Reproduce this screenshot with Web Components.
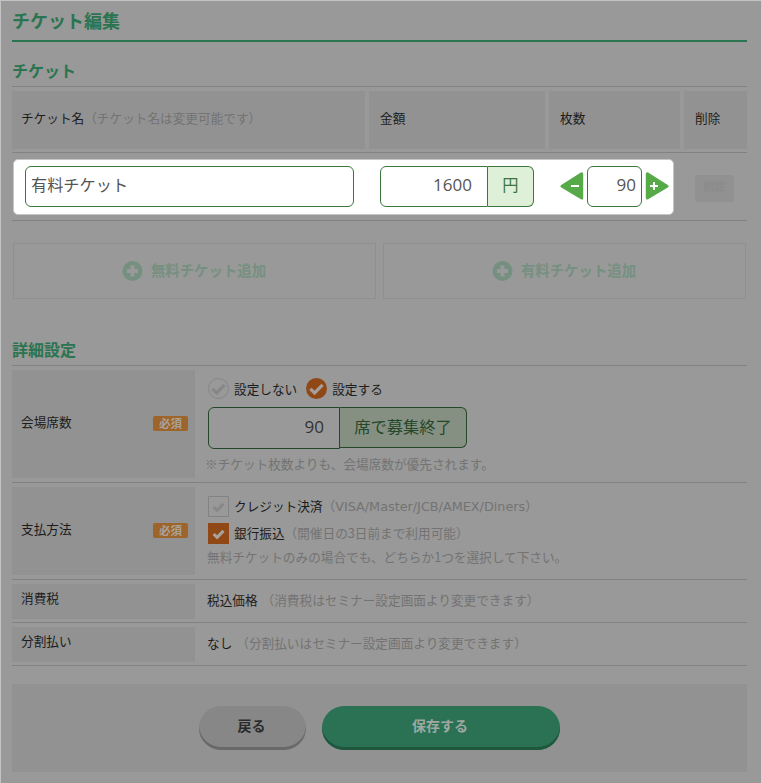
<!DOCTYPE html>
<html lang="ja">
<head>
<meta charset="utf-8">
<title>チケット編集</title>
<style>
html,body{margin:0;height:100%;background:#999}
body{overflow:hidden;font-family:"Noto Sans CJK JP",sans-serif;font-size:12.65px;color:#1c1c1c;line-height:18px}
</style>
</head>
<body>
<ticket-page></ticket-page>
<script>
const define = (name, html) => {
  const t = document.createElement('template');
  t.innerHTML = html;
  customElements.define(name, class extends HTMLElement {
    constructor() {
      super();
      this.attachShadow({ mode: 'open' }).appendChild(t.content.cloneNode(true));
    }
  });
};

define('section-title', `<style>
:host{display:flex;align-items:center;box-sizing:border-box;color:#2b7450;font-weight:700;font-size:16px;height:27px;border-bottom:1px solid #828282;padding-bottom:7px}
:host([main]){font-size:18px;height:41px;border-bottom:2px solid #2b7450;padding-bottom:2px}
</style><slot></slot>`);

define('head-cell', `<style>
:host{display:flex;align-items:center;background:#929292;padding:0 0 4px var(--pad,11px);box-sizing:border-box;height:58px;white-space:nowrap}
</style><slot></slot>`);

define('hint-text', `<style>:host{color:#737373;white-space:nowrap}</style><slot></slot>`);

define('text-field', `<style>
:host{display:flex;align-items:center;box-sizing:border-box;height:41px;border:1px solid #3c763d;border-radius:6px;font:16.2px/24px "Open Sans","Noto Sans CJK JP",sans-serif;color:#555;padding:0 5px 3px;white-space:nowrap}
:host([num]){justify-content:flex-end;font-size:17px}
:host([joined]){border-radius:6px 0 0 6px;padding-right:15px}
:host([dim]){border-color:#24472a;color:#333;height:42px;padding-bottom:2px}
</style><slot></slot>`);

define('field-addon', `<style>
:host{display:flex;align-items:center;justify-content:center;box-sizing:border-box;height:41px;border:1px solid #3c763d;border-left:0;border-radius:0 6px 6px 0;background:#dff0d8;color:#3c763d;font-size:16.3px;padding-bottom:4px;white-space:nowrap}
:host([dim]){border-color:#24472a;background:#869082;color:#24472a}
</style><slot></slot>`);

define('step-minus', `<style>:host{display:block;width:24px;height:28px}svg{display:block}</style>
<svg width="24" height="28"><path d="M21.7 1.8V26L2 14.2z" fill="#56aa47" stroke="#56aa47" stroke-width="3" stroke-linejoin="round"/><path d="M11 14h8" stroke="#fff" stroke-width="2"/></svg>`);

define('step-plus', `<style>:host{display:block;width:24px;height:28px}svg{display:block}</style>
<svg width="24" height="28"><path d="M2.3 1.8V26L22 14.2z" fill="#56aa47" stroke="#56aa47" stroke-width="3" stroke-linejoin="round"/><path d="M5 14h8M9 10v8" stroke="#fff" stroke-width="2"/></svg>`);

define('add-button', `<style>
:host{display:flex;align-items:center;justify-content:center;gap:8px;box-sizing:border-box;width:363px;height:56px;border:1px solid #8f8f8f;color:#759080;font-weight:700;font-size:14.4px;padding-right:1px}
svg{display:block}span{padding-bottom:2px}
</style><svg width="21" height="20" viewBox="0 0 21 20"><circle cx="10.5" cy="10" r="10" fill="#759080"/><path d="M10.5 4.5v11M5 10h11" stroke="#999" stroke-width="3.8"/></svg><span><slot></slot></span>`);

define('required-badge', `<style>
:host{display:flex;align-items:center;justify-content:center;width:35px;height:15px;border-radius:2px;background:#9d652a;color:#aaa29a;font-weight:700;font-size:11.5px;line-height:15px}
</style><slot></slot>`);

define('form-row', `<style>
:host{display:flex;box-sizing:border-box;padding:4px 0;border-bottom:1px solid #828282}
.label{display:flex;align-items:center;justify-content:space-between;box-sizing:border-box;width:183px;background:#929292;padding:0 7px 4px 9px}
:host([compact]){padding-bottom:3px}
:host([compact]) .label{padding-bottom:7px}
.body{flex:1;padding-left:13px;white-space:nowrap}
::slotted(required-badge){margin-top:3px}
</style><div class="label"><span><slot name="label"></slot></span><slot name="badge"></slot></div><div class="body"><slot></slot></div>`);

define('check-mark', `<style>
:host{display:block;width:21px;height:21px}svg{display:block}
.on,.round,.roundon{display:none}
:host([kind=on]) .off,:host([kind=round]) .off,:host([kind=roundon]) .off{display:none}
:host([kind=on]) .on,:host([kind=round]) .round,:host([kind=roundon]) .roundon{display:inline}
</style><svg width="21" height="21" fill="none">
<g class="off"><path d="M.5.5h20v20H.5z" stroke="#828282"/><path d="M5.6 11l3.5 3.4 6.4-6.5" stroke="#878787" stroke-width="3"/></g>
<g class="on"><path d="M0 0h21v21H0z" fill="#914817"/><path d="M5.6 11l3.5 3.4 6.4-6.5" stroke="#aaa29d" stroke-width="3"/></g>
<g class="round"><circle cx="10.5" cy="10.5" r="10" stroke="#858585"/><path d="M4.4 10.8l4.2 4.1 8-8.1" stroke="#878787" stroke-width="3.2"/></g>
<g class="roundon"><circle cx="10.5" cy="10.5" r="10.5" fill="#914817"/><path d="M4.4 10.8l4.2 4.1 8-8.1" stroke="#a5a09c" stroke-width="3.2"/></g>
</svg>`);

define('pill-button', `<style>
:host{display:flex;align-items:center;justify-content:center;box-sizing:border-box;width:107px;height:44px;border-radius:22px;background:#878787;box-shadow:inset 0 -3px 0 #696969;color:#2b2b2b;font-weight:700;font-size:14px;padding:0 2px 6px 0}
:host([primary]){width:238px;background:#2a7253;box-shadow:inset 0 -3px 0 #1f563e;color:#9fa8a2}
</style><slot></slot>`);

define('ticket-page', `<style>
:host{display:block;box-sizing:border-box;width:761px;height:783px;border:solid #c4c4c4;border-width:1px 0 0 1px;padding:0 14px 0 11px}
.h2a{margin-top:18px}
.heads{display:grid;grid-template-columns:353px 176px 131px 63px;gap:4px;padding:4px 0;border-bottom:1px solid #828282;height:66px;box-sizing:border-box}
.ticket{display:flex;align-items:center;box-sizing:border-box;height:68px;border-bottom:1px solid #828282;padding-left:1px}
.spot{display:flex;align-items:center;box-sizing:border-box;width:661px;height:56px;background:#fff;border:1px solid #c5c5c5;border-radius:5px;padding:0 2px 1px 11px}
.name{width:329px;margin-right:26px}.price{width:108px}.yen{width:46px;margin-right:26px}.count{width:55px;margin:0 3px}
.del{display:flex;align-items:center;justify-content:center;width:39px;height:27px;margin:3px 0 0 21px;border-radius:3px;background:#919191;color:#8b8b8b;font-weight:700;font-size:11px;box-sizing:border-box;padding-bottom:4px}
.adds{display:flex;gap:7px;padding:22px 0 0 1px}
.h2b{margin-top:40px}
.line{display:flex;align-items:center;gap:5px;height:27px}
.line>span,.radio{padding-bottom:1px}
.seat{height:108px}
.pay{height:88px}
.small{height:31px;display:flex;align-items:center;gap:9px;margin:0 0 4px -1px}
.small hint-text{margin-left:-5px}
.group{display:flex;align-items:flex-start}
.footer{display:flex;justify-content:center;gap:16px;background:#929292;height:88px;box-sizing:border-box;margin-top:18px;padding-top:22px}
</style>
<section-title main>チケット編集</section-title>
<section-title class="h2a">チケット</section-title>
<div class="heads">
<head-cell style="--pad:9px">チケット名<hint-text>（チケット名は変更可能です）</hint-text></head-cell>
<head-cell>金額</head-cell><head-cell>枚数</head-cell><head-cell>削除</head-cell>
</div>
<div class="ticket"><div class="spot">
<text-field class="name">有料チケット</text-field>
<text-field class="price" num joined>1600</text-field><field-addon class="yen">円</field-addon>
<step-minus></step-minus><text-field class="count" num>90</text-field><step-plus></step-plus>
</div><div class="del">削除</div></div>
<div class="adds"><add-button>無料チケット追加</add-button><add-button>有料チケット追加</add-button></div>
<section-title class="h2b">詳細設定</section-title>
<form-row><span slot="label">会場席数</span><required-badge slot="badge">必須</required-badge>
<div class="seat"><div class="line" style="height:37px"><check-mark kind="round"></check-mark>設定しない<check-mark kind="roundon" style="margin-left:4px"></check-mark>設定する</div>
<div class="group"><text-field style="width:132px" num joined dim>90</text-field><field-addon style="width:127px" dim>席で募集終了</field-addon></div>
<hint-text style="display:block;margin:6px 0 0 -3px">※チケット枚数よりも、会場席数が優先されます。</hint-text></div>
</form-row>
<form-row><span slot="label">支払方法</span><required-badge slot="badge">必須</required-badge>
<div class="pay"><div style="height:6px"></div><div class="line"><check-mark></check-mark><span>クレジット決済<hint-text>（<span style="font-family:'DejaVu Sans';font-size:12.8px">VISA/Master/JCB/AMEX/Diners</span>）</hint-text></span></div>
<div class="line"><check-mark kind="on"></check-mark><span>銀行振込<hint-text>（開催日の3日前まで利用可能）</hint-text></span></div>
<hint-text style="display:block;margin:1px 0 0 -1px">無料チケットのみの場合でも、どちらか1つを選択して下さい。</hint-text></div>
</form-row>
<form-row compact><span slot="label">消費税</span><div class="small">税込価格<hint-text>（消費税はセミナー設定画面より変更できます）</hint-text></div></form-row>
<form-row compact><span slot="label">分割払い</span><div class="small">なし<hint-text>（分割払いはセミナー設定画面より変更できます）</hint-text></div></form-row>
<div class="footer"><pill-button>戻る</pill-button><pill-button primary>保存する</pill-button></div>
`);
</script>
</body>
</html>
